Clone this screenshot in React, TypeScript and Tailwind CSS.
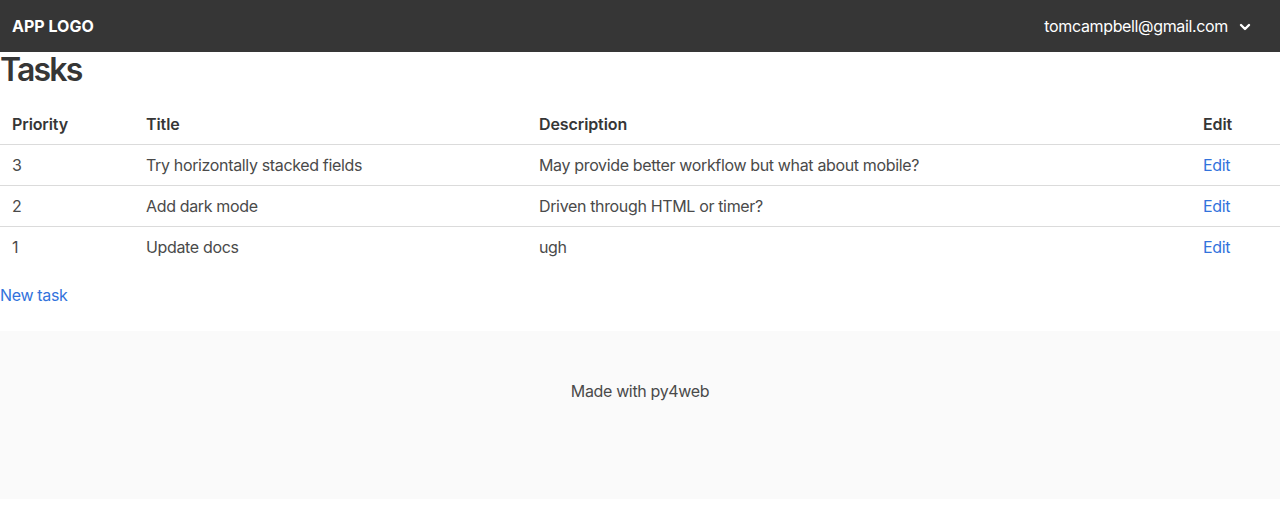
import React from "react";

const rows = [
  { p: "3", t: "Try horizontally stacked fields", d: "May provide better workflow but what about mobile?" },
  { p: "2", t: "Add dark mode", d: "Driven through HTML or timer?" },
  { p: "1", t: "Update docs", d: "ugh" },
];

export default function App() {
  return (
    <div className="min-h-[512px] bg-white tracking-[-0.35px] text-[#4a4a4a]" style={{ fontFamily: "Inter, 'Noto Sans', sans-serif" }}>
      <nav className="flex h-[52px] items-center justify-between bg-[#363636] text-white">
        <div className="px-3 text-base font-bold tracking-normal">APP LOGO</div>
        <div className="flex items-center gap-[11px] pr-[29px] text-base leading-6">
          <span>tomcampbell@gmail.com</span>
          <svg width="12" height="12" viewBox="0 0 12 12" className="mt-[1px]">
            <path d="M2 4 L6 8 L10 4" fill="none" stroke="white" strokeWidth="2.4" strokeLinecap="round" strokeLinejoin="round" />
          </svg>
        </div>
      </nav>
      <h1 className="h-[36px] text-[32px] font-semibold leading-[36px] tracking-[-1.8px] text-[#363636]">Tasks</h1>
      <div className="mt-[16px]">
        <table className="w-full border-collapse text-base leading-6">
          <thead>
            <tr className="border-b border-[#dbdbdb] text-left font-semibold tracking-[-0.1px] text-[#363636]">
              <th className="w-[134px] px-3 py-2 font-semibold">Priority</th>
              <th className="w-[393px] px-3 py-2 font-semibold">Title</th>
              <th className="w-[664px] px-3 py-2 font-semibold">Description</th>
              <th className="px-3 py-2 font-semibold">Edit</th>
            </tr>
          </thead>
          <tbody>
            {rows.map((r, i) => (
              <tr key={r.p} className={i < rows.length - 1 ? "border-b border-[#dbdbdb]" : ""}>
                <td className="px-3 py-2">{r.p}</td>
                <td className="px-3 py-2">{r.t}</td>
                <td className="px-3 py-2">{r.d}</td>
                <td className="px-3 py-2">
                  <a className="text-[#3273dc]">Edit</a>
                </td>
              </tr>
            ))}
          </tbody>
        </table>
      </div>
      <div className="mt-4 text-base leading-6">
        <a className="text-[#3273dc]">New task</a>
      </div>
      <footer className="mt-6 bg-[#fafafa] px-6 pb-24 pt-12 text-center text-base leading-6">
        Made with py4web
      </footer>
    </div>
  );
}
